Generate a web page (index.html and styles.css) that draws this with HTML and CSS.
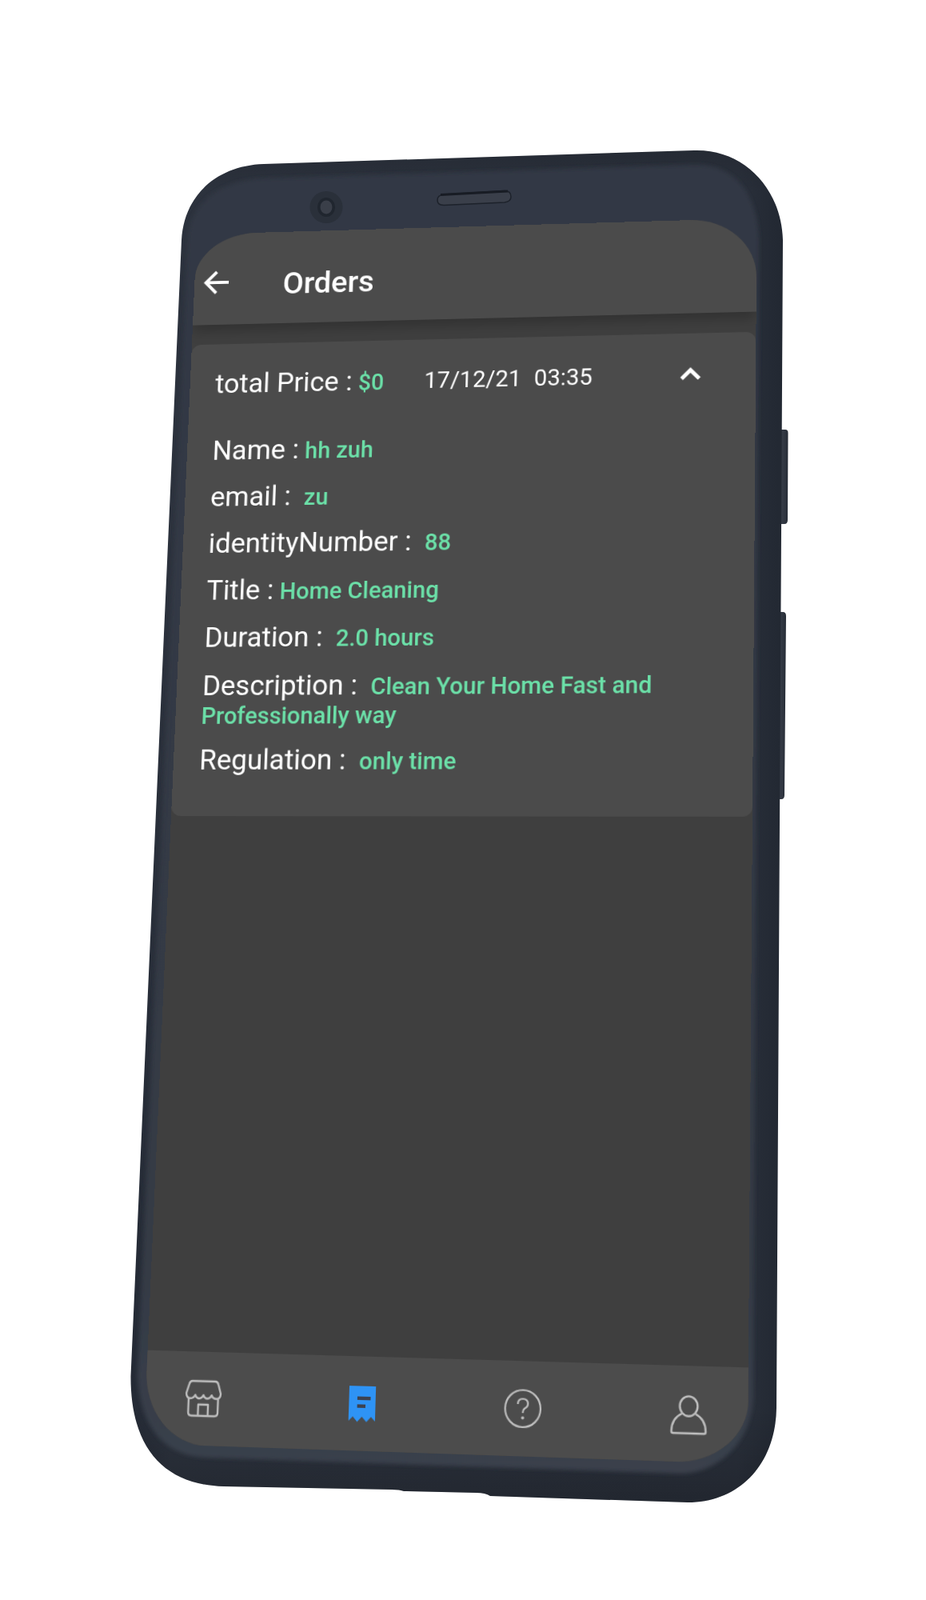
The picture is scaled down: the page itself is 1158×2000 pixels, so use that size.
FILE: index.html
```html
<!DOCTYPE html>
<html lang="en">
<head>
<meta charset="utf-8">
<title>Orders</title>
<link rel="stylesheet" href="styles.css">
</head>
<body>
<main class="stage">
  <svg class="phone" width="1158" height="2000" viewBox="0 0 1158 2000" aria-hidden="true">
    <defs>
      <linearGradient id="bodyGrad" x1="0" y1="0" x2="1" y2="0">
        <stop offset="0" stop-color="#242a35"/>
        <stop offset="0.06" stop-color="#2c323d"/>
        <stop offset="0.5" stop-color="#2b313c"/>
        <stop offset="0.93" stop-color="#2a303b"/>
        <stop offset="1" stop-color="#222832"/>
      </linearGradient>
      <linearGradient id="shadeGrad" x1="0" y1="0" x2="0" y2="1">
        <stop offset="0" stop-color="#000" stop-opacity="0.12"/>
        <stop offset="0.03" stop-color="#000" stop-opacity="0"/>
        <stop offset="0.93" stop-color="#000" stop-opacity="0"/>
        <stop offset="1" stop-color="#000" stop-opacity="0.2"/>
      </linearGradient>
      <linearGradient id="plateGrad" x1="0" y1="0" x2="0" y2="1">
        <stop offset="0" stop-color="#333944"/>
        <stop offset="0.85" stop-color="#343a45"/>
        <stop offset="1" stop-color="#3a404c"/>
      </linearGradient>
      <linearGradient id="btnGrad" x1="0" y1="0" x2="1" y2="0">
        <stop offset="0" stop-color="#3a404b"/>
        <stop offset="0.6" stop-color="#333944"/>
        <stop offset="1" stop-color="#262c36"/>
      </linearGradient>
      <filter id="soft" x="-5%" y="-5%" width="110%" height="110%">
        <feGaussianBlur stdDeviation="2.500"/>
      </filter>
    </defs>
    <path fill="url(#btnGrad)" d="M974 537 H982 Q985.500 537 985.500 541 L985 650 Q985 655 981 655 H976 Q971 640 971 620 L972 560 Q972 545 974 537 Z"/>
    <path fill="url(#btnGrad)" d="M972 765 H979 Q983 765 983 770 L981 994 Q981 999 977 999 H973 Q969 985 969 965 L970 790 Q970 775 972 765 Z"/>
    <path fill="url(#bodyGrad)" d="M330 205 L868 188 C930 186 977 235 979 300 L971 1760 C970 1830 925 1878 860 1878 L613 1870 Q607 1866 596 1866 L505 1864 Q500 1862 490 1862 L280 1858 C205 1856 163 1810 163.500 1720 L227 300 C230 245 270 207 330 205 Z"/>
    <path fill="url(#shadeGrad)" d="M330 205 L868 188 C930 186 977 235 979 300 L971 1760 C970 1830 925 1878 860 1878 L613 1870 Q607 1866 596 1866 L505 1864 Q500 1862 490 1862 L280 1858 C205 1856 163 1810 163.500 1720 L227 300 C230 245 270 207 330 205 Z"/>
    <path fill="url(#plateGrad)" filter="url(#soft)" d="M330 223 L868 206 C918 205 947 240 949 300 L942 1745 C941 1800 900 1842 850 1842 L258 1822 C210 1820 176 1790 172 1720 L235 300 C237 250 280 225 330 223 Z"/>
    <ellipse cx="408" cy="259" rx="20.500" ry="20" fill="#2a303a"/>
    <ellipse cx="408" cy="259" rx="11" ry="12" fill="#20262f"/>
    <ellipse cx="408" cy="259" rx="7.500" ry="8.500" fill="#3a3f49"/>
    <path fill="#3a3f4a" stroke="#1d222b" stroke-width="1.500" d="M555 243 L631 238.500 Q639 238.500 639 246 Q639 252 631 253 L555 256.500 Q547 256.500 547 250 Q547 244 555 243 Z"/>
    <path fill="none" stroke="#181c24" stroke-width="3" d="M551 243.500 L635 239"/>
  </svg>

  <section class="screen">
    <header class="appbar">
      <svg class="back" width="48" height="48" viewBox="0 0 24 24" aria-hidden="true">
        <path d="M20 12 H5 M12 5 L5 12 L12 19" fill="none" stroke="#fff" stroke-width="2"/>
      </svg>
      <h1 class="title">Orders</h1>
    </header>

    <article class="card">
      <div class="summary">
        <p class="total">total Price : <span class="value value-price">$0</span></p>
        <p class="stamp"><span>17/12/21</span><span>03:35</span></p>
        <svg class="chevron" width="48" height="48" viewBox="0 0 24 24" aria-hidden="true">
          <path d="M6.500 14.500 L12 9 L17.500 14.500" fill="none" stroke="#fff" stroke-width="2.400"/>
        </svg>
      </div>
      <p class="row row-first">Name : <span class="value">hh zuh</span></p>
      <p class="row">email :&nbsp; <span class="value">zu</span></p>
      <p class="row">identityNumber :&nbsp; <span class="value">88</span></p>
      <p class="row">Title : <span class="value">Home Cleaning</span></p>
      <p class="row">Duration :&nbsp; <span class="value">2.0 hours</span></p>
      <p class="row row-wrap">Description :&nbsp; <span class="value">Clean Your Home Fast and Professionally way</span></p>
      <p class="row row-last">Regulation :&nbsp; <span class="value">only time</span></p>
    </article>

    <nav class="tabbar">
      <svg class="tab" width="48" height="48" viewBox="0 0 24 24" aria-hidden="true">
        <g fill="none" stroke="#bdbdbd" stroke-width="1.200" stroke-linejoin="round">
          <path d="M5 2 H19 Q20.500 2 21 4 L22.500 9 Q22.500 12 20 12 Q17.800 12 17 10 Q16 12 14.500 12 Q12.800 12 12 10 Q11 12 9.500 12 Q7.800 12 7 10 Q6 12 4 12 Q1.500 12 1.500 9 L3 4 Q3.500 2 5 2 Z"/>
          <path d="M3 12 V20 Q3 22 5 22 H19 Q21 22 21 20 V12"/>
          <path d="M9 22 V15.500 H15 V22"/>
        </g>
      </svg>
      <svg class="tab" width="48" height="48" viewBox="0 0 24 24" aria-hidden="true">
        <path fill="#2e93f5" d="M4 2 H20 V22 L17.500 19.500 L14.800 22.500 L12 19.500 L9.200 22.500 L6.500 19.500 L4 22 Z"/>
        <path fill="#3c4250" d="M9 8 H17 V10 H9 Z M9 12.500 H14 V14.500 H9 Z"/>
      </svg>
      <svg class="tab tab-help" width="48" height="48" viewBox="0 0 24 24" aria-hidden="true">
        <g fill="none" stroke="#bdbdbd" stroke-width="1.100">
          <circle cx="12" cy="12" r="10.500"/>
          <path d="M9 9.500 Q9 6.500 12 6.500 Q15 6.500 15 9.300 Q15 11 13 12 Q12 12.700 12 14.500"/>
        </g>
        <circle cx="12" cy="17.300" r="0.900" fill="#bdbdbd"/>
      </svg>
      <svg class="tab tab-person" width="48" height="48" viewBox="0 0 24 24" aria-hidden="true">
        <g fill="none" stroke="#bdbdbd" stroke-width="1.200" stroke-linejoin="round">
          <ellipse cx="12" cy="6.800" rx="5.200" ry="5.600"/>
          <path d="M8 11 C4.500 12.700 2 16 2 21 Q2 22 3 22 H21 Q22 22 22 21 C22 16 19.500 12.700 16 11"/>
        </g>
      </svg>
    </nav>
  </section>
</main>
</body>
</html>
```

FILE: styles.css
```css
* { box-sizing: border-box; }

html, body {
  margin: 0;
  background: #fff;
}

.stage {
  position: relative;
  width: 1158px;
  height: 2000px;
  overflow: hidden;
  font-family: Roboto, "Liberation Sans", sans-serif;
}

.phone {
  position: absolute;
  left: 0;
  top: 0;
  display: block;
}

/* Laid out at 720 x 1500 and mapped on to the tilted display quad. */
.screen {
  position: absolute;
  left: 0;
  top: 0;
  width: 720px;
  height: 1500px;
  display: flex;
  flex-direction: column;
  overflow: hidden;
  background: #3f3f3f;
  border-radius: 80px 84px 84px 76px / 60px 76px 70px 84px;
  transform-origin: 0 0;
  transform: matrix3d(0.935831, -0.038879, 0, -0.00003918,
                      -0.053097, 0.919573, 0, -0.00004882,
                      0, 0, 1, 0,
                      246, 293, 0, 1);
}

.appbar {
  flex: none;
  position: relative;
  z-index: 1;
  height: 121px;
  display: flex;
  align-items: center;
  background: #4b4b4b;
  box-shadow: 0 8px 16px rgba(0, 0, 0, 0.22);
}

.back {
  flex: none;
  margin: 9px 0 0 5px;
}

.title {
  margin: 15px 0 0 63px;
  font-size: 39.500px;
  font-weight: 500;
  color: #fff;
}

.card {
  flex: none;
  margin-top: 26px;
  height: 603px;
  padding: 22.700px 0 0 33px;
  background: #4b4b4b;
  border-radius: 12px;
  color: #fff;
  font-size: 35.500px;
}

.summary {
  height: 60px;
  display: flex;
  align-items: center;
}

.total {
  width: 270px;
  margin: 0;
  line-height: 60px;
  white-space: nowrap;
}

.stamp {
  display: flex;
  gap: 16px;
  margin: 0;
  font-size: 29.500px;
}

.chevron {
  margin-left: 99px;
}

.row {
  height: 60px;
  margin: 0;
  line-height: 60px;
}

.row-first { margin-top: 26px; }

.row-wrap {
  height: 72px;
  margin-top: 14px;
  padding-right: 60px;
  line-height: 34px;
}

.row-last { margin-top: 8.700px; }

.value {
  margin-left: -1px;
  color: #6be0a8;
  font-size: 29.500px;
  font-weight: 500;
}

.value-price { font-size: 29px; }

.tabbar {
  flex: none;
  margin-top: auto;
  height: 108px;
  padding: 0 45px 0 47px;
  display: flex;
  align-items: center;
  justify-content: space-between;
  background: #4c4c4c;
}

.tab { flex: none; }

.tab-help { margin-right: 2px; }

.tab-person { margin-top: 4px; }
```
